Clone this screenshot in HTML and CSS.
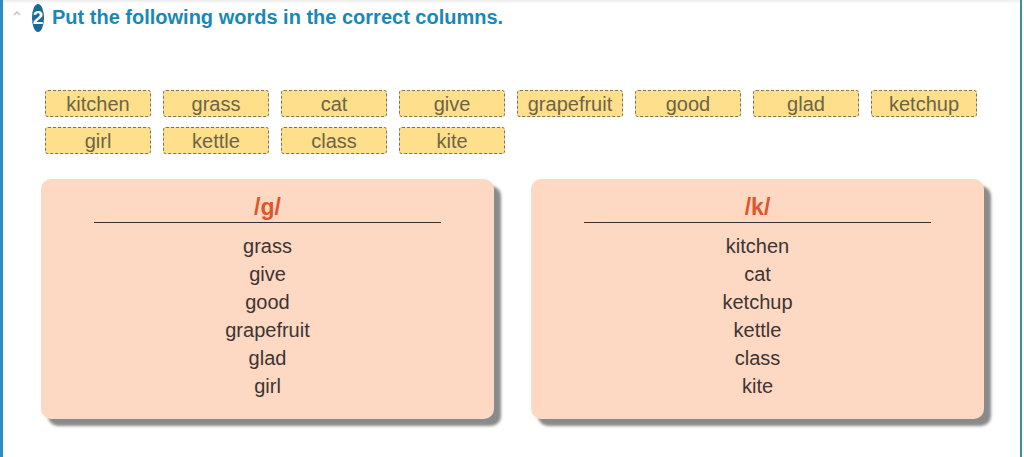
FILE: index.html
```html
<!DOCTYPE html>
<html lang="en">
<head>
    <meta charset="UTF-8">
    <title>Sort the words</title>
    <link rel="stylesheet" href="styles.css">
</head>
<body>
    <div class="panel">
        <div class="task-title">
            <svg class="caret" width="10" height="8" viewBox="0 0 10 8">
                <path d="M2 6 L5 3 L8 6" fill="none" stroke="#c4c8cc" stroke-width="1.6"/>
            </svg>
            <span class="badge">2</span>
            <h1>Put the following words in the correct columns.</h1>
        </div>

        <div class="word-bank">
            <span class="chip">kitchen</span>
            <span class="chip">grass</span>
            <span class="chip">cat</span>
            <span class="chip">give</span>
            <span class="chip">grapefruit</span>
            <span class="chip">good</span>
            <span class="chip">glad</span>
            <span class="chip">ketchup</span>
            <span class="chip">girl</span>
            <span class="chip">kettle</span>
            <span class="chip">class</span>
            <span class="chip">kite</span>
        </div>

        <div class="columns">
            <div class="column-box">
                <h2>/g/</h2>
                <ul>
                    <li>grass</li>
                    <li>give</li>
                    <li>good</li>
                    <li>grapefruit</li>
                    <li>glad</li>
                    <li>girl</li>
                </ul>
            </div>
            <div class="column-box">
                <h2>/k/</h2>
                <ul>
                    <li>kitchen</li>
                    <li>cat</li>
                    <li>ketchup</li>
                    <li>kettle</li>
                    <li>class</li>
                    <li>kite</li>
                </ul>
            </div>
        </div>
    </div>
</body>
</html>
```

FILE: styles.css
```css
body {
    margin: 0;
    padding: 0;
    font-family: 'Liberation Sans', Arial, sans-serif;
    background: #fff;
}

.panel {
    height: 457px;
    box-sizing: border-box;
    width: 1022px;
    border-left: 3px solid #2a8ec4;
    border-right: 2px solid #3a8f9c;
    background: linear-gradient(#ececec, #fff 4px);
}

.task-title {
    display: flex;
    align-items: center;
    height: 35px;
    padding-left: 9px;
}

.caret {
    margin-top: -10px;
}

.badge {
    display: flex;
    align-items: center;
    justify-content: center;
    width: 12px;
    height: 28px;
    margin-left: 10px;
    border-radius: 50%;
    background: #1a6a98;
    color: #fff;
    font-weight: bold;
    font-size: 19px;
}

h1 {
    margin: 0 0 0 8px;
    font-size: 20px;
    font-weight: bold;
    color: #1b87b6;
}

.word-bank {
    display: grid;
    grid-template-columns: repeat(8, 106px);
    column-gap: 12px;
    row-gap: 10px;
    margin-top: 55px;
    padding-left: 42px;
}

.chip {
    height: 27px;
    box-sizing: border-box;
    border: 1px dashed #7a7468;
    border-radius: 3px;
    background: #fedf8c;
    color: #6d6545;
    font-size: 20px;
    line-height: 26px;
    text-align: center;
}

.columns {
    display: flex;
    gap: 37px;
    margin-top: 25px;
    padding-left: 38px;
}

.column-box {
    width: 453px;
    height: 240px;
    box-sizing: border-box;
    padding: 15px 53px 0;
    border-radius: 10px;
    background: #fdd8c3;
    box-shadow: 7px 7px 3px #8a8a8a;
    text-align: center;
}

h2 {
    margin: 0;
    padding-bottom: 2px;
    border-bottom: 1px solid #3a3030;
    font-size: 23px;
    line-height: 26px;
    color: #e0562a;
}

ul {
    list-style: none;
    margin: 9px 0 0;
    padding: 0;
}

li {
    font-size: 20px;
    line-height: 28px;
    color: #3d3434;
}
```
